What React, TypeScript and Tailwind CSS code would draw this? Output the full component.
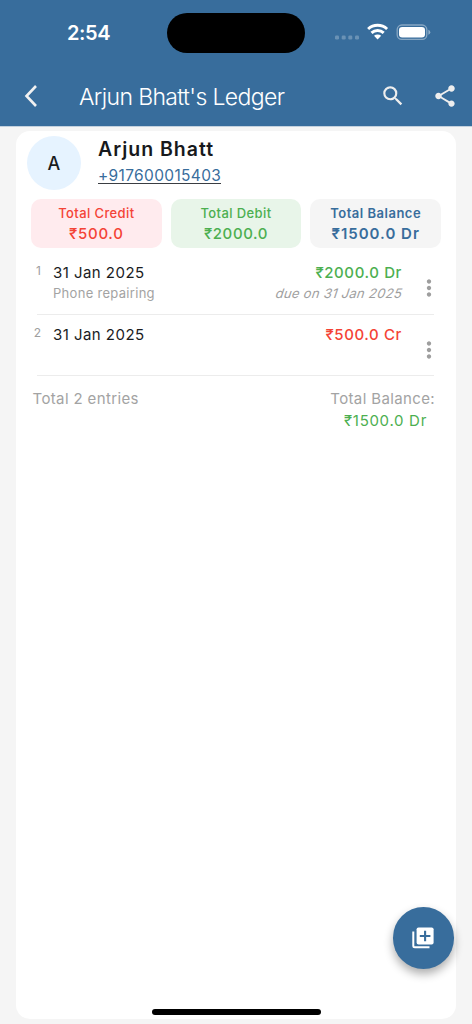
import React from 'react';
import { clsx } from 'clsx';
import { MdSearch, MdShare, MdMoreVert } from 'react-icons/md';

interface Entry {
  id: number;
  date: string;
  note?: string;
  amount: string;
  due?: string;
  type: 'debit' | 'credit';
}

const entries: Entry[] = [
  {
    id: 1,
    date: '31 Jan 2025',
    note: 'Phone repairing',
    amount: '₹2000.0 Dr',
    due: 'due on 31 Jan 2025',
    type: 'debit',
  },
  { id: 2, date: '31 Jan 2025', amount: '₹500.0 Cr', type: 'credit' },
];

const StatusBar: React.FC = () => (
  <div className="flex h-[65px] items-center">
    <span className="ml-[67px] w-[100px] text-[20px] leading-6 font-semibold tracking-[-0.4px]">2:54</span>
    <div className="h-10 w-[138px] rounded-full bg-black" />
    <svg className="ml-[29px]" width="97" height="20" viewBox="0 0 97 20" fill="#fff">
      <g opacity=".25">
        <rect x="1" y="12.5" width="4" height="4" rx="1.3" />
        <rect x="7.7" y="12.5" width="4" height="4" rx="1.3" />
        <rect x="14.3" y="12.5" width="4" height="4" rx="1.3" />
        <rect x="21" y="12.5" width="4" height="4" rx="1.3" />
      </g>
      <g transform="translate(0 -1.3)">
        <g fill="none" stroke="#fff" strokeWidth="2.9">
          <path d="M34.1 7.3a14 14 0 0 1 19 0" />
          <path d="M37.5 11.2a9 9 0 0 1 12.2 0" />
        </g>
        <path d="M40 14.1a5.3 5.3 0 0 1 7.2 0l-3.6 3.7z" />
      </g>
      <g transform="translate(0 -.8)">
        <rect x="63.2" y="2.8" width="29.6" height="14.4" rx="4.6" fill="none" stroke="#fff" strokeOpacity=".4" strokeWidth="1.3" />
        <rect x="65" y="4.7" width="26" height="10.6" rx="3.2" />
        <path d="M94.4 7.6q1.9.7 1.9 2.5t-1.9 2.5z" opacity=".45" />
      </g>
    </svg>
  </div>
);

interface SummaryCardProps {
  label: string;
  value: string;
  className: string;
  valueClassName: string;
}

const SummaryCard: React.FC<SummaryCardProps> = ({ label, value, className, valueClassName }) => (
  <div className={clsx('flex h-[49px] flex-1 flex-col items-center rounded-[10px] pt-1 whitespace-nowrap', className)}>
    <span className="text-[13px] leading-5">{label}</span>
    <span className={clsx('text-[15px] leading-[21px]', valueClassName)}>{value}</span>
  </div>
);

const EntryRow: React.FC<{ entry: Entry }> = ({ entry }) => (
  <div className="ml-[21px] mr-[22px] flex h-[61.5px] border-b border-[#ececec] pt-2.5 whitespace-nowrap">
    <span className="-ml-1 w-2 text-right text-[12px] leading-4 text-[#9e9e9e]">{entry.id}</span>
    <div className="ml-3 flex flex-1 flex-col">
      <span className="text-[15px] leading-5 tracking-[0.46px] text-[#1a1c1e]">{entry.date}</span>
      <span className="text-[13px] leading-[21px] tracking-[0.3px] text-[#a3a3a3]">{entry.note}</span>
    </div>
    <div className="flex flex-col items-end">
      <span
        className={clsx(
          'text-[15px] leading-5 font-medium tracking-[0.6px]',
          entry.type === 'debit' ? 'text-[#4caf50]' : 'text-[#f44336]',
        )}
      >
        {entry.amount}
      </span>
      <span className="-skew-x-[18deg] text-[13px] leading-[21px] tracking-[0.3px] text-[#9e9e9e]">{entry.due}</span>
    </div>
    <MdMoreVert className="-mr-2 ml-3.5 mt-3 size-[26px] text-[#9e9e9e]" />
  </div>
);

export default function App() {
  return (
    <div className="relative flex h-[1024px] w-[472px] flex-col overflow-hidden bg-[#f5f5f5] font-['Inter',sans-serif]">
      <header className="h-[126px] shrink-0 bg-[#386d9c] text-white">
        <StatusBar />
        <div className="flex h-[61px] items-center">
          <svg className="ml-[22px]" width="18" height="24" viewBox="0 0 18 24" fill="none" stroke="#f1f1f1" strokeWidth="2.6">
            <path d="M14 2 4.5 12l9.5 10" />
          </svg>
          <h1 className="mt-0.5 ml-[39px] flex-1 text-[23px] leading-8 font-light tracking-[-0.63px] whitespace-nowrap">
            Arjun Bhatt&apos;s Ledger
          </h1>
          <MdSearch className="mr-[26px] size-[26px] text-[#eee]" />
          <MdShare className="mr-3.5 size-[26px] text-[#eee]" />
        </div>
      </header>
      <div className="h-px shrink-0 bg-[#c3d1de]" />

      <main className="mx-4 mt-1 h-[888px] rounded-[14px] bg-white">
        <div className="flex pt-[5px] pl-[11px]">
          <div className="flex size-[54px] items-center justify-center rounded-full bg-[#e6f3ff] text-[18px] font-medium text-[#1a1c1e]">
            A
          </div>
          <div className="ml-[17px] flex flex-col items-start whitespace-nowrap">
            <h2 className="h-[27px] text-[19.5px] leading-[27px] font-semibold tracking-[0.98px] text-[#17191c]">
              Arjun Bhatt
            </h2>
            <a className="h-[21px] border-b border-[#3a3d42] text-[15.5px] leading-[26px] tracking-[0.35px] text-[#386d9c]">
              +917600015403
            </a>
          </div>
        </div>

        <div className="mx-[15px] mt-[9px] flex gap-[9px] tracking-[0.4px]">
          <SummaryCard
            label="Total Credit"
            value="₹500.0"
            className="bg-[#ffebee] font-medium text-[#f44336]"
            valueClassName="tracking-[0.7px]"
          />
          <SummaryCard
            label="Total Debit"
            value="₹2000.0"
            className="bg-[#e8f5e9] font-medium text-[#4caf50]"
            valueClassName="tracking-[0.6px]"
          />
          <SummaryCard
            label="Total Balance"
            value="₹1500.0 Dr"
            className="bg-[#f5f5f5] font-semibold tracking-[0.5px] text-[#386d9c]"
            valueClassName="tracking-[1px]"
          />
        </div>

        <div className="mt-[5px]">
          {entries.map((entry) => (
            <EntryRow key={entry.id} entry={entry} />
          ))}
        </div>

        <div className="mt-3 flex justify-between pr-[21px] pl-[16.5px] text-[15px] leading-[22px] tracking-[0.37px] whitespace-nowrap text-[#a3a3a3]">
          <span>Total 2 entries</span>
          <div className="flex flex-col items-end">
            <span>Total Balance:</span>
            <span className="mr-2 tracking-[0.7px] text-[#4caf50]">₹1500.0 Dr</span>
          </div>
        </div>
      </main>

      <button className="absolute top-[907px] left-[392.5px] flex size-[61.5px] items-center justify-center rounded-full bg-[#386d9c] shadow-[0_5px_10px_rgba(0,0,0,0.32)]">
        <svg width="24" height="24" viewBox="0 0 24 24">
          <path d="M2.3 5.4v14.4a1.5 1.5 0 0 0 1.5 1.5H18.5" fill="none" stroke="#fff" strokeWidth="2" />
          <rect x="5.6" y="1.4" width="17" height="17" rx="1.9" fill="#fff" />
          <path d="M14.1 4.7v10.6M8.8 10h10.6" stroke="#386d9c" strokeWidth="2.1" />
        </svg>
      </button>
      <div className="absolute bottom-[9px] left-[151.5px] h-1.5 w-[169px] rounded-full bg-black" />
    </div>
  );
}
